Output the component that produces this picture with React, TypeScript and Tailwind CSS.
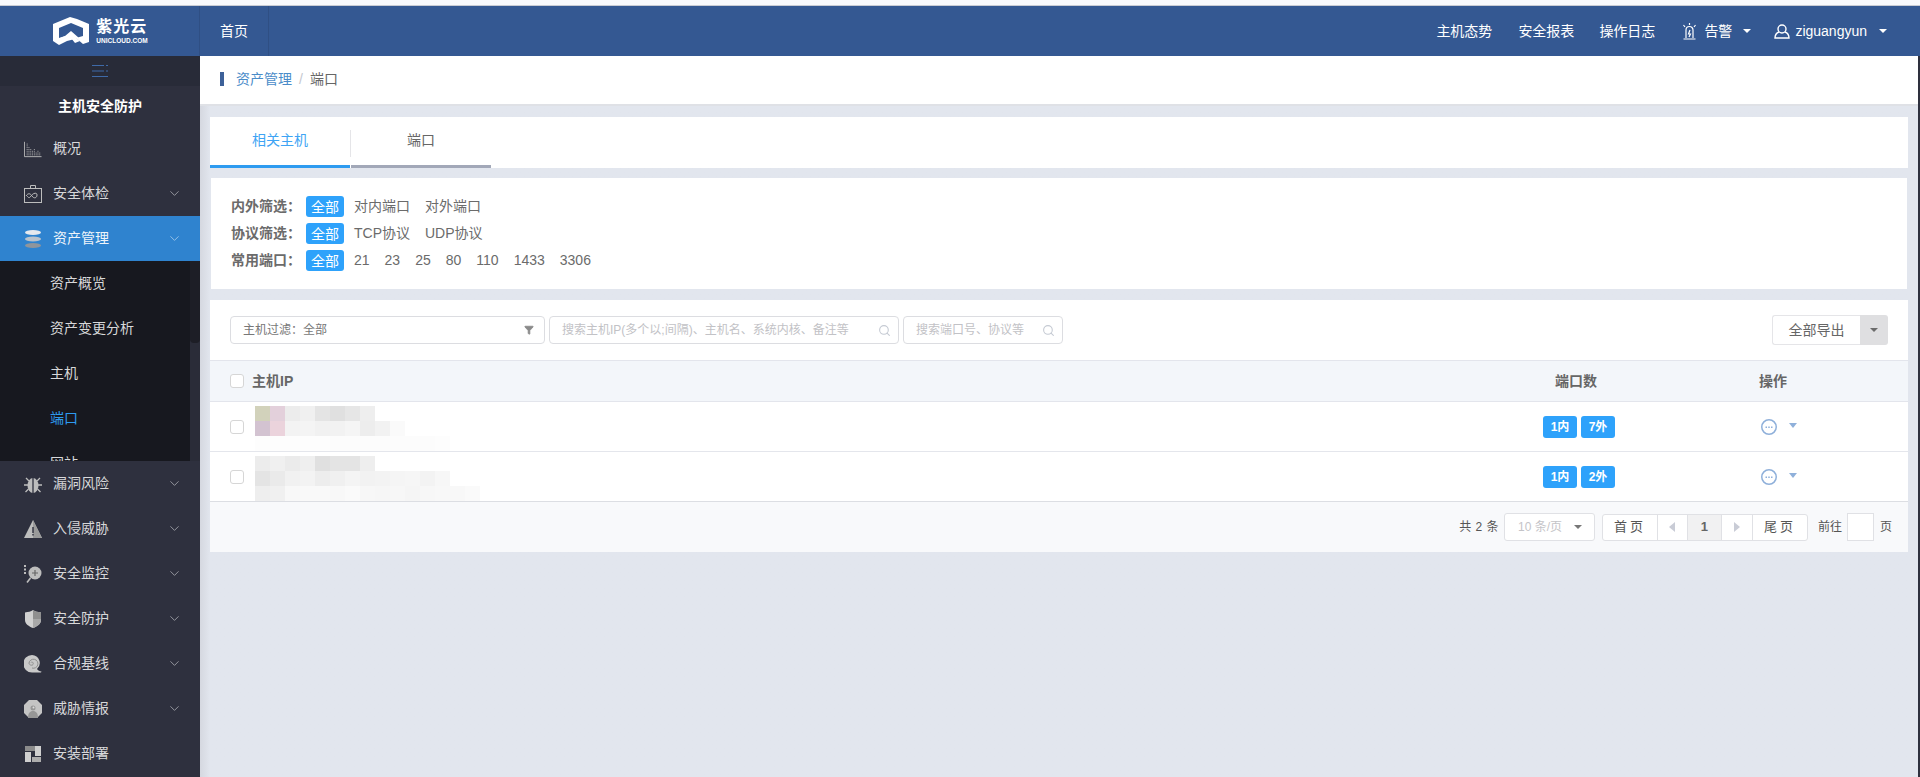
import { ChevronDown, Filter, Search } from "lucide-react";

const FONT = "font-['Liberation_Sans','Noto_Sans_CJK_SC',sans-serif]";

const Caret = ({ className = "" }: { className?: string }) => (
  <span className={`inline-block w-0 h-0 border-x-[4px] border-x-transparent border-t-[4px] ${className}`} />
);

const Logo = () => (
  <div className="flex items-center gap-[7px] ml-[2px]">
    <svg width="36" height="28" viewBox="0 0 36 28" fill="#fff">
      <path d="M17 0 L24 2 L36 7 L36 25 L30 27 L23 21 L30 19 L30 11 L18 6 L6 11 L6 21 L12 19 L18 14 L26 21 L14 24 L6 28 L0 24 L0 7 Z" />
      <path d="M18 17 L27 24 L22 26 L18 21 L12 24 L7 21 Z" />
    </svg>
    <div className="flex flex-col text-white leading-none">
      <span className="text-[16px] font-bold tracking-[1px] leading-[17px]">紫光云</span>
      <span className="text-[6.5px] font-bold leading-[8px] mt-[2px]">UNICLOUD.COM</span>
    </div>
  </div>
);

const iconColor = "#bdbdbd";

// sidebar icons, all about 18x18 drawings
const IconChart = () => (
  <svg width="20" height="18" viewBox="0 0 20 18" fill="none" stroke={iconColor}>
    <path d="M.5 1v16.500h19" />
    <path strokeDasharray="1 1" d="M3.500 16V3M5.500 16V6M7.500 16V8M9.500 16V10M11.500 16V8M13.500 16V12M15.500 16V10M17.500 16V12" />
  </svg>
);
const IconCheckup = () => (
  <svg width="18" height="18" viewBox="0 0 18 18" fill="none" stroke={iconColor}>
    <rect x=".5" y="3.500" width="17" height="14" />
    <path d="M6.500 3V.5h5V3" />
    <path d="M2 11c2-3 4-3 6 0s5 2 5-1-4-2-6 1-3 1-4 0" />
  </svg>
);
const IconStack = () => (
  <svg width="18" height="18" viewBox="0 0 18 18">
    <ellipse cx="9" cy="2.500" rx="8" ry="2.500" fill="#e6e9ee" />
    <ellipse cx="9" cy="9" rx="8" ry="2.500" fill="#b9c2cc" />
    <ellipse cx="9" cy="15.500" rx="8" ry="2.500" fill="#8f959c" />
  </svg>
);
const IconBug = () => (
  <svg width="18" height="18" viewBox="0 0 18 18" fill="none" stroke={iconColor} strokeWidth="1.300">
    <ellipse cx="9" cy="10.500" rx="5.500" ry="7.500" fill={iconColor} stroke="none" />
    <path d="M9 3v15" stroke="#2e303e" />
    <path d="M5 6 2 3M4 10H0M4.500 14 1.500 17M13 6l3-3M14 10h4M13.500 14l3 3" />
  </svg>
);
const IconWarn = () => (
  <svg width="18" height="18" viewBox="0 0 18 18">
    <path d="M9 0 18 18H0Z" fill={iconColor} />
    <path d="M9 0 18 18H9Z" fill="#9a9a9a" />
    <path d="M8.300 7h1.400v6H8.300zM8.300 14h1.400v1.600H8.300z" fill="#2e303e" />
  </svg>
);
const IconMonitor = () => (
  <svg width="18" height="18" viewBox="0 0 18 18">
    <path d="M0 0h2v2H0zM0 3.500h2v2H0zM0 7h2v2H0z" fill={iconColor} />
    <circle cx="11" cy="8" r="6.500" fill={iconColor} />
    <path d="M8 8h6M11 5v6" stroke="#666" strokeWidth="1.200" />
    <path d="M6.500 13 3 17.500" stroke={iconColor} strokeWidth="1.600" />
  </svg>
);
const IconShield = () => (
  <svg width="18" height="18" viewBox="0 0 18 18">
    <path d="M9 0c2 1.500 5 2 8 2.500V10c0 4-4 6.500-8 8-4-1.500-8-4-8-8V2.500C4 2 7 1.500 9 0Z" fill="#d0d0d0" />
    <path d="M9 0c2 1.500 5 2 8 2.500V9H9Z" fill="#8f8f8f" />
    <path d="M9 9h8v1c0 4-4 6.500-8 8Z" fill="#a8a8a8" />
  </svg>
);
const IconShell = () => (
  <svg width="18" height="18" viewBox="0 0 18 18" fill="none">
    <path d="M8 0a8 8 0 0 1 5 14c1 1.500 2.500 2.500 4.500 2.500L17 17.500H8A8.500 8.500 0 0 1 8 0Z" fill="#c9c9c9" />
    <path d="M8 13a4.500 4.500 0 1 0-3-5c0 2 3 3 4 1.500S8 6 7 7.500" stroke="#8e8e8e" />
  </svg>
);
const IconIntel = () => (
  <svg width="18" height="18" viewBox="0 0 18 18">
    <path d="M5 0h8l5 5v8l-5 5H5l-5-5V5Z" fill="#c4c4c4" />
    <path d="M4 18c0-5 2-7 5-7s5 2 5 7Z" fill="#969696" />
    <circle cx="9" cy="8" r="2.500" fill="#969696" />
    <circle cx="9.500" cy="7.500" r="1" fill="#ddd" />
  </svg>
);
const IconDeploy = () => (
  <svg width="18" height="18" viewBox="0 0 18 18">
    <path d="M1 1h10v5H1z" fill="#8b8b8b" />
    <path d="M11 1h6v10h-6z" fill="#cfcfcf" />
    <path d="M1 7h6v10H1z" fill="#cfcfcf" />
    <path d="M8 12h9v5H8z" fill="#adadad" />
  </svg>
);

const MenuItem = ({ icon, label, arrow = true, active = false }: any) => (
  <div className={`h-[45px] shrink-0 flex items-center pl-[24px] pr-[18px] text-[14px] ${active ? "bg-[#2f83cf] text-[#eef4fa]" : "text-[#d8d8da]"}`}>
    <span className="w-[18px] flex justify-center shrink-0">{icon}</span>
    <span className="ml-[11px] flex-1">{label}</span>
    {arrow && <ChevronDown size={15} strokeWidth={1.2} className={active ? "text-[#b5d3ee]" : "text-[#b4b5bb]"} />}
  </div>
);

const Chip = ({ children }: any) => (
  <span className="inline-flex items-center justify-center w-[38px] h-[21px] rounded-[3px] bg-[#2ea2fb] text-white text-[14px] leading-none">
    {children}
  </span>
);

const FilterRow = ({ label, items }: { label: string; items: string[] }) => (
  <div className="h-[27px] flex items-center text-[14px] text-[#6b6b6b]">
    <span className="w-[75px] font-bold">{label}</span>
    <Chip>全部</Chip>
    <div className="ml-[10px] flex gap-[15px]">
      {items.map((t) => (
        <span key={t}>{t}</span>
      ))}
    </div>
  </div>
);

const Mosaic = ({ rows }: { rows: string[][] }) => (
  <svg width="240" height="45" className="block">
    {rows.map((row, y) =>
      row.map((fill, x) => <rect key={`${x}-${y}`} x={x * 15} y={y * 15} width="15" height="15" fill={fill} />)
    )}
  </svg>
);

const Checkbox = () => <span className="block w-[14px] h-[14px] rounded-[3px] border border-[#d6d6d6] bg-white shrink-0" />;

const Badge = ({ children }: any) => (
  <span className="inline-flex items-center justify-center w-[34px] h-[22px] rounded-[3px] bg-[#2ea2fb] text-white text-[12px] font-bold">
    {children}
  </span>
);

const TableRow = ({ rows, inner, outer }: { rows: string[][]; inner: string; outer: string }) => (
  <div className="h-[50px] flex items-center border-b border-[#e4e6ec] bg-white">
    <div className="ml-[20px]"><Checkbox /></div>
    <div className="ml-[11px] flex-1 h-[45px] self-end">
      <Mosaic rows={rows} />
    </div>
    <div className="w-[210px] flex justify-center gap-[4px] mr-[75px]">
      <Badge>{inner}</Badge>
      <Badge>{outer}</Badge>
    </div>
    <div className="w-[149px] pl-[2px] flex items-center">
      <svg width="16" height="16" viewBox="0 0 16 16" fill="none">
        <circle cx="8" cy="8" r="7.250" stroke="#8fb0da" strokeWidth="1.500" />
        <path d="M4.500 7.500h1.500v1.500H4.500zM7.250 7.500h1.500v1.500h-1.500zM10 7.500h1.500v1.500H10z" fill="#8fb0da" />
      </svg>
      <Caret className="ml-[12px] -mt-[3px] border-t-[5px] border-t-[#8fb0da]" />
    </div>
  </div>
);

const menuTop = [
  { icon: <IconBug />, label: "漏洞风险" },
  { icon: <IconWarn />, label: "入侵威胁" },
  { icon: <IconMonitor />, label: "安全监控" },
  { icon: <IconShield />, label: "安全防护" },
  { icon: <IconShell />, label: "合规基线" },
  { icon: <IconIntel />, label: "威胁情报" },
  { icon: <IconDeploy />, label: "安装部署", arrow: false },
];

const subMenu = ["资产概览", "资产变更分析", "主机", "端口", "网站"];

const r1 = [
  ["#d2d2bb", "#e3d0db", "#ececec", "#f0f0f0", "#e4e4e4", "#e0e0e0", "#e6e6e6", "#eeeeee", "#ffffff"],
  ["#d3c3d1", "#ebd3dc", "#f3f3f3", "#f4f4f4", "#f1f1f1", "#f2f2f2", "#f5f5f5", "#ededed", "#f2f2f2", "#fafafa"],
  ["#fdfdfd", "#fdfdfd", "#fdfdfd", "#fdfdfd", "#fdfdfd", "#fcfcfc", "#fcfcfc", "#fcfcfc", "#fcfcfc", "#fcfcfc", "#fcfcfc", "#fcfcfc", "#fdfdfd"],
];
const r2 = [
  ["#ececec", "#f0f0f0", "#ebebeb", "#efefef", "#e0e0e0", "#e4e4e4", "#e4e4e4", "#eeeeee", "#ffffff"],
  ["#e4e4e4", "#eaeaea", "#f1f1f1", "#f3f3f3", "#ededed", "#f0f0f0", "#f4f4f4", "#f2f2f2", "#f3f3f3", "#f5f5f5", "#f6f6f6", "#f3f3f3", "#f7f7f7"],
  ["#eeeeee", "#f0f0f0", "#f8f8f8", "#f9f9f9", "#f9f9f9", "#f8f8f8", "#fafafa", "#f7f7f7", "#f6f6f6", "#f7f7f7", "#f5f5f5", "#f7f7f7", "#f8f8f8", "#f8f8f8", "#fafafa"],
];

export default function App() {
  return (
    <div className={`${FONT} w-[1920px] h-[777px] overflow-hidden flex flex-col bg-[#e2e6ee]`}>
      <div className="h-[6px] bg-[#f8f9fc] border-b border-[#c9ccd4] shrink-0" />
      <header className="h-[50px] shrink-0 bg-[#345892] flex items-center text-white text-[14px]">
        <div className="w-[200px] h-full flex items-center justify-center border-r border-[#2f4f84]">
          <Logo />
        </div>
        <div className="w-[69px] h-full flex items-center justify-center border-r border-[#2f4f84]">首页</div>
        <div className="ml-auto flex items-center pr-[33px]">
          <span>主机态势</span>
          <span className="ml-[26px]">安全报表</span>
          <span className="ml-[25px]">操作日志</span>
          <svg width="15" height="17" viewBox="0 0 15 17" fill="none" stroke="#fff" strokeWidth="1.200" className="ml-[27px]">
            <path d="M4 15V7a3.500 3.500 0 0 1 7 0v8M1.500 16h12M8 7 6.500 11h2L7 14M1.500 2 3 4M13.500 2 12 4M7.500 0v2" />
          </svg>
          <span className="ml-[7px]">告警</span>
          <Caret className="ml-[11px] border-t-white" />
          <svg width="16" height="15" viewBox="0 0 16 15" fill="none" stroke="#fff" strokeWidth="1.400" className="ml-[23px]">
            <circle cx="8" cy="5" r="4" />
            <path d="M5 8C2.500 9 1 11 1 14h14c0-3-1.500-5-4-6" />
          </svg>
          <span className="ml-[5px]">ziguangyun</span>
          <Caret className="ml-[12px] border-t-white" />
        </div>
      </header>

      <div className="flex-1 min-h-0 flex">
        <aside className="w-[200px] shrink-0 bg-[#2e303e] flex flex-col overflow-hidden">
          <div className="h-[30px] shrink-0 bg-[#282b38] flex items-center justify-center">
            <svg width="16" height="12" viewBox="0 0 16 12" stroke="#3f6aa8">
              <path d="M0 .5h12M14 .5h2M0 6h12M14 6h2M0 11.500h16" />
            </svg>
          </div>
          <div className="h-[40px] shrink-0 flex items-center justify-center text-white text-[14px] font-bold">主机安全防护</div>
          <MenuItem icon={<IconChart />} label="概况" arrow={false} />
          <MenuItem icon={<IconCheckup />} label="安全体检" />
          <MenuItem icon={<IconStack />} label="资产管理" active />
          <div className="h-[200px] shrink-0 overflow-hidden flex bg-[#17181f]">
            <div className="flex-1 text-[14px] text-[#d8d8da] overflow-hidden">
              {subMenu.map((s) => (
                <div key={s} className={`h-[45px] flex items-center pl-[50px] ${s === "端口" ? "text-[#2e9bf0]" : ""}`}>
                  {s}
                </div>
              ))}
            </div>
            <div className="w-[10px] bg-[#2a2c38]">
              <div className="h-[82px] bg-[#1d1e26] rounded-b-[4px]" />
            </div>
          </div>
          {menuTop.map((m) => (
            <MenuItem key={m.label} {...m} />
          ))}
        </aside>

        <main className="flex-1 min-w-0 border-r-[2px] border-[#2e303e] bg-gradient-to-r from-[#d5d8e0] from-0% to-[#e2e6ee] to-[0.6%]">
          <div className="h-[50px] bg-white border-b-2 border-[#dfe1e6] flex items-center pl-[20px] pb-[2px] text-[14px]">
            <span className="w-[4px] h-[14px] bg-[#3d6199]" />
            <span className="ml-[12px] text-[#4a8cc9]">资产管理</span>
            <span className="mx-[7px] text-[#c5c8cf]">/</span>
            <span className="text-[#666]">端口</span>
          </div>

          <div className="pl-[10px] pr-[10px]">
            <div className="mt-[11px] h-[51px] bg-white flex items-stretch text-[14px]">
              <div className="w-[140px] border-b-[3px] border-[#2e9bf0] text-[#3ea4f4] flex items-center justify-center pb-[2px]">相关主机</div>
              <div className="mt-[13px] mb-[11px] w-px bg-[#e5e5e8]" />
              <div className="w-[140px] border-b-[3px] border-[#a2a8b8] text-[#666] flex items-center justify-center pb-[2px]">端口</div>
            </div>

            <div className="mt-[10px] ml-px mr-px h-[111px] bg-white pl-[20px] pt-[15px]">
              <FilterRow label="内外筛选：" items={["对内端口", "对外端口"]} />
              <FilterRow label="协议筛选：" items={["TCP协议", "UDP协议"]} />
              <FilterRow label="常用端口：" items={["21", "23", "25", "80", "110", "1433", "3306"]} />
            </div>

            <div className="mt-[11px]">
              <div className="h-[60px] bg-white flex items-center pl-[20px] pr-[20px] text-[12px]">
                <div className="w-[315px] h-[28px] border border-[#dcdde1] rounded-[4px] flex items-center pl-[12px] pr-[10px] text-[#777]">
                  <span className="flex-1">主机过滤：全部</span>
                  <Filter size={10} className="text-[#8a8a8a] fill-[#8a8a8a]" />
                </div>
                <div className="ml-[4px] w-[350px] h-[28px] border border-[#dcdde1] rounded-[4px] flex items-center pl-[12px] pr-[7px] text-[#c2c2c6]">
                  <span className="flex-1 truncate">搜索主机IP(多个以;间隔)、主机名、系统内核、备注等</span>
                  <Search size={13} className="text-[#c5cad3]" />
                </div>
                <div className="ml-[4px] w-[160px] h-[28px] border border-[#dcdde1] rounded-[4px] flex items-center pl-[12px] pr-[7px] text-[#c2c2c6]">
                  <span className="flex-1 truncate">搜索端口号、协议等</span>
                  <Search size={13} className="text-[#c5cad3]" />
                </div>
                <div className="ml-auto flex h-[30px] text-[14px] text-[#666]">
                  <div className="w-[88px] border border-[#e5e5e8] border-r-0 rounded-l-[3px] flex items-center justify-center">全部导出</div>
                  <div className="w-[28px] bg-[#dfdfe1] rounded-r-[3px] flex items-center justify-center">
                    <Caret className="border-t-[#6b6b6b]" />
                  </div>
                </div>
              </div>

              <div className="h-[42px] bg-[#f3f6fa] border-y border-[#e3e5ec] flex items-center text-[14px] text-[#666] font-bold">
                <div className="ml-[20px]"><Checkbox /></div>
                <span className="ml-[8px] flex-1">主机IP</span>
                <span className="w-[204px] text-center mr-[81px]">端口数</span>
                <span className="w-[149px]">操作</span>
              </div>

              <TableRow rows={r1} inner="1内" outer="7外" />
              <TableRow rows={r2} inner="1内" outer="2外" />

              <div className="h-[51px] bg-[#f8f9fb] border-t border-[#dcdee3] -mt-px flex items-center justify-end pr-[16px] text-[12px] text-[#555]">
                <span className="tracking-[0.5px]">共 2 条</span>
                <div className="ml-[5px] w-[91px] h-[28px] border border-[#e0e1e5] rounded-[3px] bg-white flex items-center pl-[13px] text-[12px] text-[#c4c4c8]">
                  <span className="flex-1">10 条/页</span>
                  <Caret className="mr-[12px] border-t-[#777]" />
                </div>
                <div className="ml-[7px] h-[27px] border border-[#e0e1e5] rounded-[3px] bg-white flex items-stretch text-[13px]">
                  <span className="w-[54px] flex items-center justify-center tracking-[3px]">首页</span>
                  <span className="w-[30px] flex items-center justify-center border-l border-[#e0e1e5]">
                    <span className="w-0 h-0 border-y-[5px] border-y-transparent border-r-[6px] border-r-[#c9ccd6]" />
                  </span>
                  <span className="w-[35px] flex items-center justify-center border-x border-[#e0e1e5] bg-[#f1f1f2] font-bold text-[#666]">1</span>
                  <span className="w-[30px] flex items-center justify-center">
                    <span className="w-0 h-0 border-y-[5px] border-y-transparent border-l-[6px] border-l-[#c9ccd6]" />
                  </span>
                  <span className="w-[55px] flex items-center justify-center border-l border-[#e0e1e5] tracking-[3px]">尾页</span>
                </div>
                <span className="ml-[10px]">前往</span>
                <span className="ml-[5px] w-[27px] h-[28px] border border-[#e0e1e5] bg-white" />
                <span className="ml-[6px]">页</span>
              </div>
            </div>
          </div>
        </main>
      </div>
    </div>
  );
}
